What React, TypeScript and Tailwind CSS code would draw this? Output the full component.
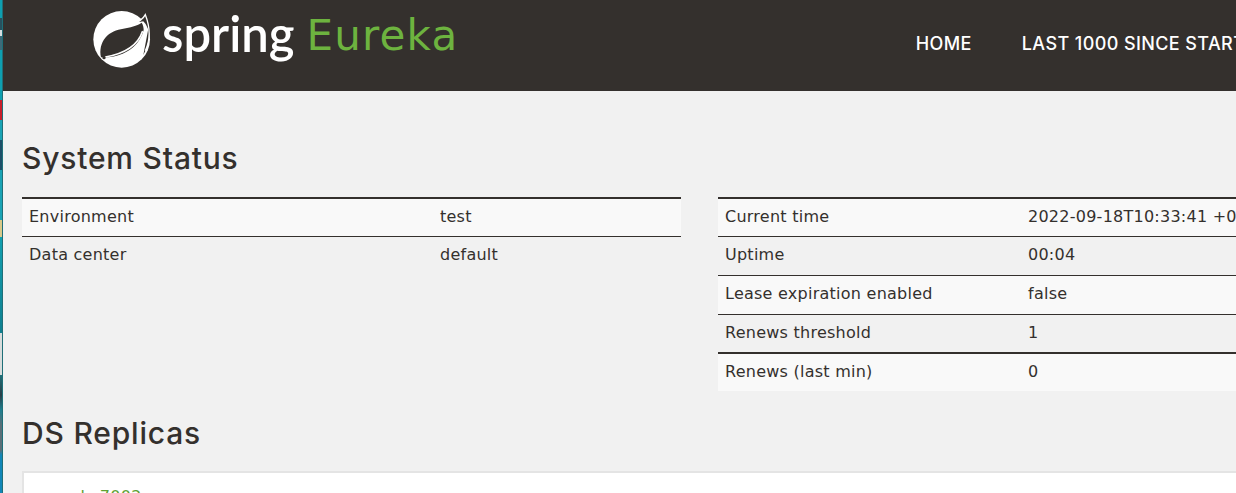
const rowsL = [["Environment", "test"], ["Data center", "default"]];
const rowsR = [
  ["Current time", "2022-09-18T10:33:41 +0800"],
  ["Uptime", "00:04"],
  ["Lease expiration enabled", "false"],
  ["Renews threshold", "1"],
  ["Renews (last min)", "0"],
];
const heights = ["h-[37px]", "h-[39px]", "h-[39px]", "h-[38px]", "h-[39px]"];

function Leaf() {
  return (
    <svg width="60" height="62" viewBox="279 24 180 186" className="shrink-0">
      <circle cx="365" cy="118" r="85" fill="#fff" />
      <path d="M418 66 L436 42 C452 80 452 125 430 165 L450 60 Z" fill="#34302d" />
      <path d="M420 62 C426 58 432 52 436 44 C450 80 452 118 436 152" fill="none" stroke="#fff" strokeWidth="4" />
      <path
        fill="#34302d"
        d="M425 68 C395 90 345 78 316 113 C303 129 298 150 303 172 C355 176 415 150 431 90 C431 82 429 74 425 68 Z"
      />
      <path d="M427 95 C412 140 365 162 316 171" fill="none" stroke="#fff" strokeWidth="5" strokeLinecap="round" />
      <circle cx="312" cy="173" r="5" fill="#34302d" />
    </svg>
  );
}

function Table({ rows, split, className }: { rows: string[][]; split: string; className: string }) {
  return (
    <div className={className}>
      <div className="border-t-2 border-[#34302d]">
        {rows.map((r, i) => (
          <div
            key={r[0]}
            className={`flex items-center px-[7px] pb-[2px] whitespace-nowrap ${heights[i]} ${i % 2 === 0 ? "bg-[#f9f9f9]" : ""} ${i > 0 ? (i === 4 ? "border-t-2 border-[#34302d]" : "border-t border-[#34302d]") : ""}`}
          >
            <span className={`${split} shrink-0`}>{r[0]}</span>
            <span>{r[1]}</span>
          </div>
        ))}
      </div>
    </div>
  );
}

export default function App() {
  return (
    <div className="h-[493px] w-[1236px] overflow-hidden flex bg-[#f1f1f1] text-[#34302d] font-['DejaVu_Sans',sans-serif] text-[16px] tracking-[0.25px]">
      <div className="w-[3px] shrink-0 border-r border-[#1f6f78] bg-[linear-gradient(#0e9fb0_0,#0e9fb0_18px,#27515e_18px,#27515e_30px,#d6dee0_30px,#d6dee0_36px,#3d6a78_36px,#3d6a78_50px,#0e9fb0_50px,#0e9fb0_100px,#c8202c_100px,#c8202c_120px,#1aa3b5_120px,#1aa3b5_140px,#1d4f68_140px,#1d4f68_170px,#1aa3b5_170px,#1aa3b5_220px,#d8c98a_220px,#d8c98a_237px,#12a0b0_237px,#0f7f90_333px,#d8dcdc_333px,#d8dcdc_375px,#1f6f78_375px,#2a3f48_395px,#1f7f90_410px,#5a6f78_425px,#5a6f78_450px,#1186b8_455px)]" />
      <div className="flex-1 min-w-0">
        <header className="h-[91px] bg-[#34302d] flex items-start overflow-hidden tracking-normal">
          <div className="ml-[90px] mt-[8px]"><Leaf /></div>
          <div className="ml-[9px] mt-[3px] text-[49px] leading-[60px] font-semibold font-['Lato',sans-serif] text-white">spring</div>
          <div className="ml-[12px] mt-[6px] text-[42px] leading-[60px] font-['DejaVu_Sans',sans-serif] text-[#6db33f] tracking-[1.2px]">Eureka</div>
          <nav className="ml-auto mt-[32px] flex gap-[50px] whitespace-nowrap text-white text-[18px] leading-[24px] font-medium tracking-[0.4px] font-['Inter',sans-serif] mr-[-35px]">
            <span>HOME</span>
            <span>LAST 1000 SINCE STARTUP</span>
          </nav>
        </header>
        <main className="pl-[19px]">
          <h1 className="mt-[46px] text-[30px] leading-[42px] font-medium tracking-[0.8px] font-['Inter',sans-serif]">System Status</h1>
          <div className="mt-[18px] flex items-start gap-[37px] h-[194px]">
            <Table rows={rowsL} split="w-[411px]" className="w-[659px] shrink-0" />
            <Table rows={rowsR} split="w-[303px]" className="w-[600px] shrink-0" />
          </div>
          <h1 className="mt-[21px] text-[30px] leading-[42px] font-medium tracking-[0.8px] font-['Inter',sans-serif]">DS Replicas</h1>
          <div className="mt-[17px] h-[60px] w-[1300px] bg-white border-2 border-[#e4e4e4] pt-[12px] pl-[19.5px] whitespace-nowrap">
            <span className="text-[#5fa134]">eureka7002</span>
          </div>
        </main>
      </div>
    </div>
  );
}
